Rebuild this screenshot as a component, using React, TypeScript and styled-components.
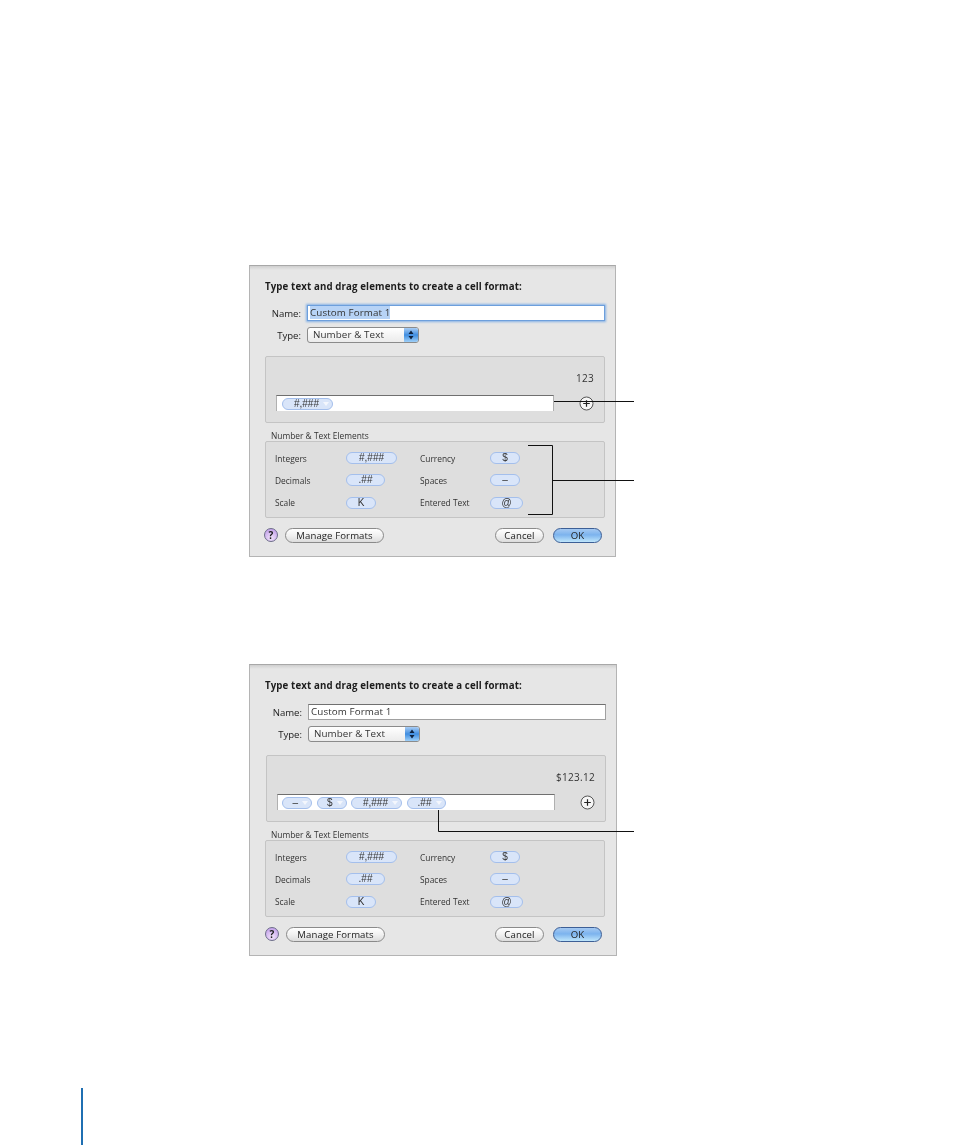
import React from "react";
import styled, { createGlobalStyle } from "styled-components";

const GlobalStyle = createGlobalStyle`
  html, body {
    margin: 0;
    padding: 0;
    background: #ffffff;
  }
`;

const Page = styled.div`
  position: relative;
  width: 954px;
  height: 1145px;
  overflow: hidden;
  padding: 265px 0 0 249px;
  box-sizing: border-box;
  font-family: "Open Sans", "DejaVu Sans", sans-serif;
  font-size: 9.6px;
  color: #1c1c1c;
`;

const Dialog = styled.div<{ $second?: boolean }>`
  width: ${(p) => (p.$second ? 368 : 367)}px;
  height: 292px;
  box-sizing: border-box;
  margin-bottom: ${(p) => (p.$second ? 132 : 107)}px;
  padding: 15px 10px 0 15px;
  background: linear-gradient(#cfcfcf 0, #e6e6e6 4px);
  border: 1px solid #b4b4b4;
  border-top-color: #a8a8a8;
  filter: blur(0.4px);
`;

const Title = styled.div`
  font-size: 9.7px;
  font-weight: 700;
  line-height: 12px;
  height: 12px;
  letter-spacing: 0.12px;
`;

const FormRow = styled.div<{ $top: number; $indent: number }>`
  display: flex;
  align-items: center;
  margin-top: ${(p) => p.$top}px;
  height: 16px;
  padding-left: ${(p) => p.$indent}px;
`;

const FieldLabel = styled.span`
  font-size: 9.6px;
  width: 36px;
  text-align: right;
  margin-right: 6px;
  color: #222;
`;

const NameInput = styled.div<{ $focused?: boolean }>`
  width: 298px;
  height: 16px;
  box-sizing: border-box;
  background: #fff;
  border: 1px solid ${(p) => (p.$focused ? "#6d9fdc" : "#a0a0a0")};
  border-top-color: ${(p) => (p.$focused ? "#6d9fdc" : "#707070")};
  box-shadow: ${(p) => (p.$focused ? "0 0 2px 1px #86b2e6" : "none")};
  padding-left: 2px;
  font-size: 9.8px;
  line-height: 14px;
  color: #333;
  letter-spacing: 0.1px;
`;

const Selected = styled.span`
  background: #b7d3f6;
`;

const Select = styled.div`
  display: flex;
  width: 112px;
  height: 16px;
  box-sizing: border-box;
  border: 1px solid #8b8b8b;
  border-radius: 3px;
  background: linear-gradient(#ffffff, #ebebeb);
  overflow: hidden;
`;

const SelectText = styled.span`
  flex: 1;
  padding-left: 5px;
  font-size: 9.8px;
  line-height: 13px;
  color: #333;
  letter-spacing: 0.1px;
`;

const Stepper = styled.span`
  width: 14px;
  display: flex;
  align-items: center;
  justify-content: center;
  background: linear-gradient(#a9cdf5, #3f8de0 50%, #9fd0f8);
`;

const PreviewPanel = styled.div<{ $shift?: number }>`
  height: 67px;
  width: 340px;
  margin: 13px 0 0 ${(p) => p.$shift ?? 0}px;
  box-sizing: border-box;
  padding: 15px 10px 0 10px;
  background: #dedede;
  border: 1px solid #c4c4c4;
  border-radius: 2px;
`;

const Preview = styled.div`
  text-align: right;
  font-size: 10px;
  line-height: 12px;
  height: 12px;
  letter-spacing: 0.3px;
  color: #333;
`;

const FieldRow = styled.div`
  display: flex;
  align-items: center;
  justify-content: space-between;
  margin-top: 11px;
`;

const TokenField = styled.div<{ $pad: number }>`
  display: flex;
  align-items: center;
  gap: 4.5px;
  width: 278px;
  height: 16px;
  box-sizing: border-box;
  padding-left: ${(p) => p.$pad}px;
  background: #fff;
  border-top: 1px solid #6f6f6f;
  border-left: 1px solid #b0b0b0;
  border-right: 1px solid #b0b0b0;
`;

const Pill = styled.span<{ $w: number }>`
  display: flex;
  align-items: center;
  justify-content: center;
  width: ${(p) => p.$w}px;
  height: 12px;
  box-sizing: border-box;
  background: #d9e5f9;
  border: 1px solid #a4bfec;
  border-radius: 7px;
  font-family: "Liberation Sans", sans-serif;
  font-size: 10px;
  line-height: 10px;
  color: #333;
`;

const TokenPill = styled(Pill)`
  justify-content: flex-end;
  gap: 4px;
  padding-right: 3px;
`;

const Caret = styled.span`
  width: 0;
  height: 0;
  border-left: 3px solid transparent;
  border-right: 3px solid transparent;
  border-top: 4px solid #f4f7fd;
`;

const AddButton = styled.span`
  display: flex;
`;

const GroupLabel = styled.div`
  margin: 7px 0 0 6px;
  font-size: 8.4px;
  line-height: 12px;
  height: 12px;
  color: #333;
`;

const ElementsPanel = styled.div`
  display: grid;
  grid-template-columns: 71px 74px 70px 1fr;
  grid-auto-rows: 22.3px;
  align-items: center;
  width: 340px;
  height: 77px;
  box-sizing: border-box;
  margin-top: -1px;
  padding: 5px 0 0 9px;
  background: #dedede;
  border: 1px solid #c4c4c4;
  border-radius: 2px;
`;

const ElementLabel = styled.span`
  font-size: 8.4px;
  color: #333;
`;

const Footer = styled.div<{ $second?: boolean }>`
  display: flex;
  align-items: center;
  height: 16px;
  margin-top: 9px;
  margin-right: ${(p) => (p.$second ? 4 : 3)}px;
  padding-left: ${(p) => (p.$second ? 1 : 0)}px;
`;

const HelpButton = styled.span`
  width: 14px;
  height: 14px;
  box-sizing: border-box;
  border: 1px solid #6d6d8a;
  border-radius: 50%;
  background: radial-gradient(circle at 50% 75%, #f2e4fb, #b993e6);
  text-align: center;
  font-size: 10px;
  font-weight: 700;
  line-height: 12px;
  margin: 0 7px 0 -1px;
  color: #222;
`;

const Button = styled.span<{ $w: number; $primary?: boolean }>`
  width: ${(p) => p.$w}px;
  height: 15px;
  box-sizing: border-box;
  border: 1px solid ${(p) => (p.$primary ? "#3d5f96" : "#8a8a8a")};
  border-radius: 8px;
  background: ${(p) =>
    p.$primary
      ? "linear-gradient(#a5c9f2, #7cb3ee 45%, #bfe6fb)"
      : "linear-gradient(#ffffff, #f1f1f1 50%, #dcdcdc)"};
  text-align: center;
  font-size: 9.6px;
  line-height: 13px;
  letter-spacing: 0.1px;
  color: #222;
`;

const FooterGap = styled.span`
  flex: 1;
`;

const FooterOk = styled.span`
  margin-left: 9px;
  display: flex;
`;

const PageRule = styled.div`
  width: 2px;
  height: 57px;
  margin-left: -168px;
  background: #1f6fb2;
`;

const Callouts = styled.svg`
  position: absolute;
  left: 0;
  top: 0;
`;

const elements: { label: string; pill: string; w: number }[][] = [
  [
    { label: "Integers", pill: "#,###", w: 51 },
    { label: "Currency", pill: "$", w: 30 },
  ],
  [
    { label: "Decimals", pill: ".##", w: 39 },
    { label: "Spaces", pill: "–", w: 30 },
  ],
  [
    { label: "Scale", pill: "K", w: 30 },
    { label: "Entered Text", pill: "@", w: 33 },
  ],
];

const Elements = () => (
  <ElementsPanel>
    {elements.map((row) =>
      row.map((el) => (
        <React.Fragment key={el.label}>
          <ElementLabel>{el.label}</ElementLabel>
          <Pill $w={el.w}>{el.pill}</Pill>
        </React.Fragment>
      ))
    )}
  </ElementsPanel>
);

const PlusIcon = () => (
  <svg width="15" height="15" viewBox="0 0 15 15">
    <circle cx="7.5" cy="7.5" r="6.5" fill="#f6f6f6" stroke="#555" strokeWidth="1" />
    <path d="M7.5 4.2v6.6M4.2 7.5h6.6" stroke="#222" strokeWidth="1.2" />
  </svg>
);

const StepperIcon = () => (
  <svg width="6" height="10" viewBox="0 0 6 10">
    <path d="M3 0.5 5.5 4H0.5zM3 9.5 0.5 6h5z" fill="#10233f" />
  </svg>
);

const Footerbar = ({ second }: { second?: boolean }) => (
  <Footer $second={second}>
    <HelpButton>?</HelpButton>
    <Button $w={99}>Manage Formats</Button>
    <FooterGap />
    <Button $w={49}>Cancel</Button>
    <FooterOk>
      <Button $w={49} $primary>
        OK
      </Button>
    </FooterOk>
  </Footer>
);

const tokens = [
  { text: "–", w: 30 },
  { text: "$", w: 30 },
  { text: "#,###", w: 51 },
  { text: ".##", w: 39 },
];

const App = () => {
  return (
    <Page>
      <GlobalStyle />
      <Dialog>
        <Title>Type text and drag elements to create a cell format:</Title>
        <FormRow $top={12} $indent={0}>
          <FieldLabel>Name:</FieldLabel>
          <NameInput $focused>
            <Selected>Custom Format 1</Selected>
          </NameInput>
        </FormRow>
        <FormRow $top={6} $indent={0}>
          <FieldLabel>Type:</FieldLabel>
          <Select>
            <SelectText>Number &amp; Text</SelectText>
            <Stepper>
              <StepperIcon />
            </Stepper>
          </Select>
        </FormRow>
        <PreviewPanel>
          <Preview>123</Preview>
          <FieldRow>
            <TokenField $pad={5}>
              <TokenPill $w={51}>
                #,###
                <Caret />
              </TokenPill>
            </TokenField>
            <AddButton>
              <PlusIcon />
            </AddButton>
          </FieldRow>
        </PreviewPanel>
        <GroupLabel>Number &amp; Text Elements</GroupLabel>
        <Elements />
        <Footerbar />
      </Dialog>
      <Dialog $second>
        <Title>Type text and drag elements to create a cell format:</Title>
        <FormRow $top={12} $indent={1}>
          <FieldLabel>Name:</FieldLabel>
          <NameInput>Custom Format 1</NameInput>
        </FormRow>
        <FormRow $top={6} $indent={1}>
          <FieldLabel>Type:</FieldLabel>
          <Select>
            <SelectText>Number &amp; Text</SelectText>
            <Stepper>
              <StepperIcon />
            </Stepper>
          </Select>
        </FormRow>
        <PreviewPanel $shift={1}>
          <Preview>$123.12</Preview>
          <FieldRow>
            <TokenField $pad={4}>
              {tokens.map((t) => (
                <TokenPill key={t.text} $w={t.w}>
                  {t.text}
                  <Caret />
                </TokenPill>
              ))}
            </TokenField>
            <AddButton>
              <PlusIcon />
            </AddButton>
          </FieldRow>
        </PreviewPanel>
        <GroupLabel>Number &amp; Text Elements</GroupLabel>
        <Elements />
        <Footerbar second />
      </Dialog>
      <PageRule />
      <Callouts width="954" height="1145" viewBox="0 0 954 1145" fill="none" stroke="#111" strokeWidth="1">
        <path d="M554 401.5H634" />
        <path d="M528 445.5H552.5V514.5H528M552.5 480.5H634" />
        <path d="M438.5 810V831.5H634" />
      </Callouts>
    </Page>
  );
};

export default App;
